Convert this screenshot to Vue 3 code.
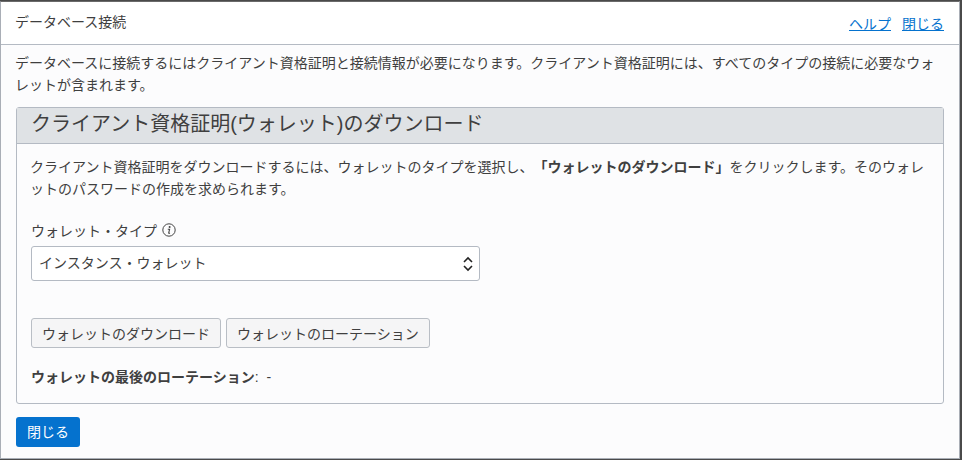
<template>
    <div class="dialog">
        <header class="dialog-header">
            <h1>データベース接続</h1>
            <div class="header-links">
                <a href="#">ヘルプ</a>
                <a href="#">閉じる</a>
            </div>
        </header>

        <div class="dialog-body">
            <p class="intro">データベースに接続するにはクライアント資格証明と接続情報が必要になります。クライアント資格証明には、すべてのタイプの接続に必要なウォレットが含まれます。</p>

            <section class="panel">
                <h2>クライアント資格証明(ウォレット)のダウンロード</h2>
                <div class="panel-content">
                    <p class="panel-text">クライアント資格証明をダウンロードするには、ウォレットのタイプを選択し、<b>「ウォレットのダウンロード」</b>をクリックします。そのウォレットのパスワードの作成を求められます。</p>

                    <label class="field-label">
                        ウォレット・タイプ
                        <svg class="info" viewBox="0 0 14 14" width="14" height="14">
                            <circle cx="7" cy="7" r="6.2" fill="none" stroke="#444" stroke-width="1" />
                            <circle cx="7.6" cy="3.9" r="1" fill="#444" />
                            <path d="M5.8 6.3h1.8l-.9 3.6c-.1.5.4.6 1.2.1" fill="none" stroke="#444" stroke-width="1.1" />
                        </svg>
                    </label>
                    <div class="select">
                        <span>インスタンス・ウォレット</span>
                        <svg viewBox="0 0 10 16" width="10" height="16">
                            <path d="M1 6l4-4 4 4M1 10l4 4 4-4" fill="none" stroke="#222" stroke-width="1.6" />
                        </svg>
                    </div>

                    <div class="actions">
                        <button type="button">ウォレットのダウンロード</button>
                        <button type="button">ウォレットのローテーション</button>
                    </div>

                    <p class="rotation"><b>ウォレットの最後のローテーション</b>:&nbsp; -</p>
                </div>
            </section>

            <button type="button" class="primary">閉じる</button>
        </div>
    </div>
</template>

<script setup>
</script>

<style>
html,
body {
    margin: 0;
    background: #4a4a4a;
}
</style>

<style scoped>
.dialog {
    box-sizing: border-box;
    width: 960px;
    height: 458px;
    margin-top: 1px;
    border: 1px solid #a9aeb6;
    border-top-color: #6a6a6a;
    background: #fcfcfd;
    color: #3f3f3f;
    font-family: "Liberation Sans", "Noto Sans CJK JP", sans-serif;
    font-size: 14px;
    text-spacing-trim: space-all;
    overflow: hidden;
}

.dialog-header {
    display: flex;
    justify-content: space-between;
    align-items: center;
    box-sizing: border-box;
    height: 43px;
    padding: 0 15px 0 14px;
    border-bottom: 1px solid #b4bac3;
    background: #fff;
}

.dialog-header h1 {
    margin: 0 0 5px;
    font-size: 14px;
    font-weight: 400;
}

.header-links {
    display: flex;
    gap: 11px;
}

.header-links a {
    color: #0572ce;
}

.dialog-body {
    padding: 8px 15px 0 15px;
}

.intro {
    margin: -1px 0 11px -1px;
    line-height: 22px;
}

.panel {
    border: 1px solid #b4bac3;
    border-radius: 3px;
}

.panel h2 {
    margin: 0;
    height: 35px;
    padding-left: 14px;
    border-bottom: 1px solid #b4bac3;
    background: #dfe2e5;
    font-size: 20px;
    font-weight: 400;
    line-height: 33px;
}

.panel-content {
    padding: 12px 14px 0;
    height: 259px;
    box-sizing: border-box;
}

.panel-text {
    margin: 0 0 20px -1px;
    line-height: 22px;
}

.field-label {
    display: flex;
    align-items: center;
    gap: 5px;
    height: 20px;
    margin-bottom: 6px;
}

.select {
    display: flex;
    justify-content: space-between;
    align-items: center;
    box-sizing: border-box;
    width: 449px;
    height: 35px;
    padding: 0 6px 0 7px;
    border: 1px solid #b4bac3;
    border-radius: 3px;
    background: #fff;
}

.select span {
    margin-bottom: 4px;
}

.actions {
    display: flex;
    gap: 5px;
    margin-top: 37px;
}

.actions button {
    height: 30px;
    padding: 0 10px;
    border: 1px solid #b9bec5;
    border-radius: 3px;
    background: #f5f5f6;
    color: #3f3f3f;
    font: inherit;
    cursor: pointer;
}

.rotation {
    margin: 18px 0 0;
    line-height: 22px;
}

.primary {
    display: block;
    width: 64px;
    height: 30px;
    margin-top: 13px;
    padding: 0 0 2px;
    border: none;
    border-radius: 3px;
    background: #0572ce;
    color: #fff;
    font: inherit;
    cursor: pointer;
}
</style>
